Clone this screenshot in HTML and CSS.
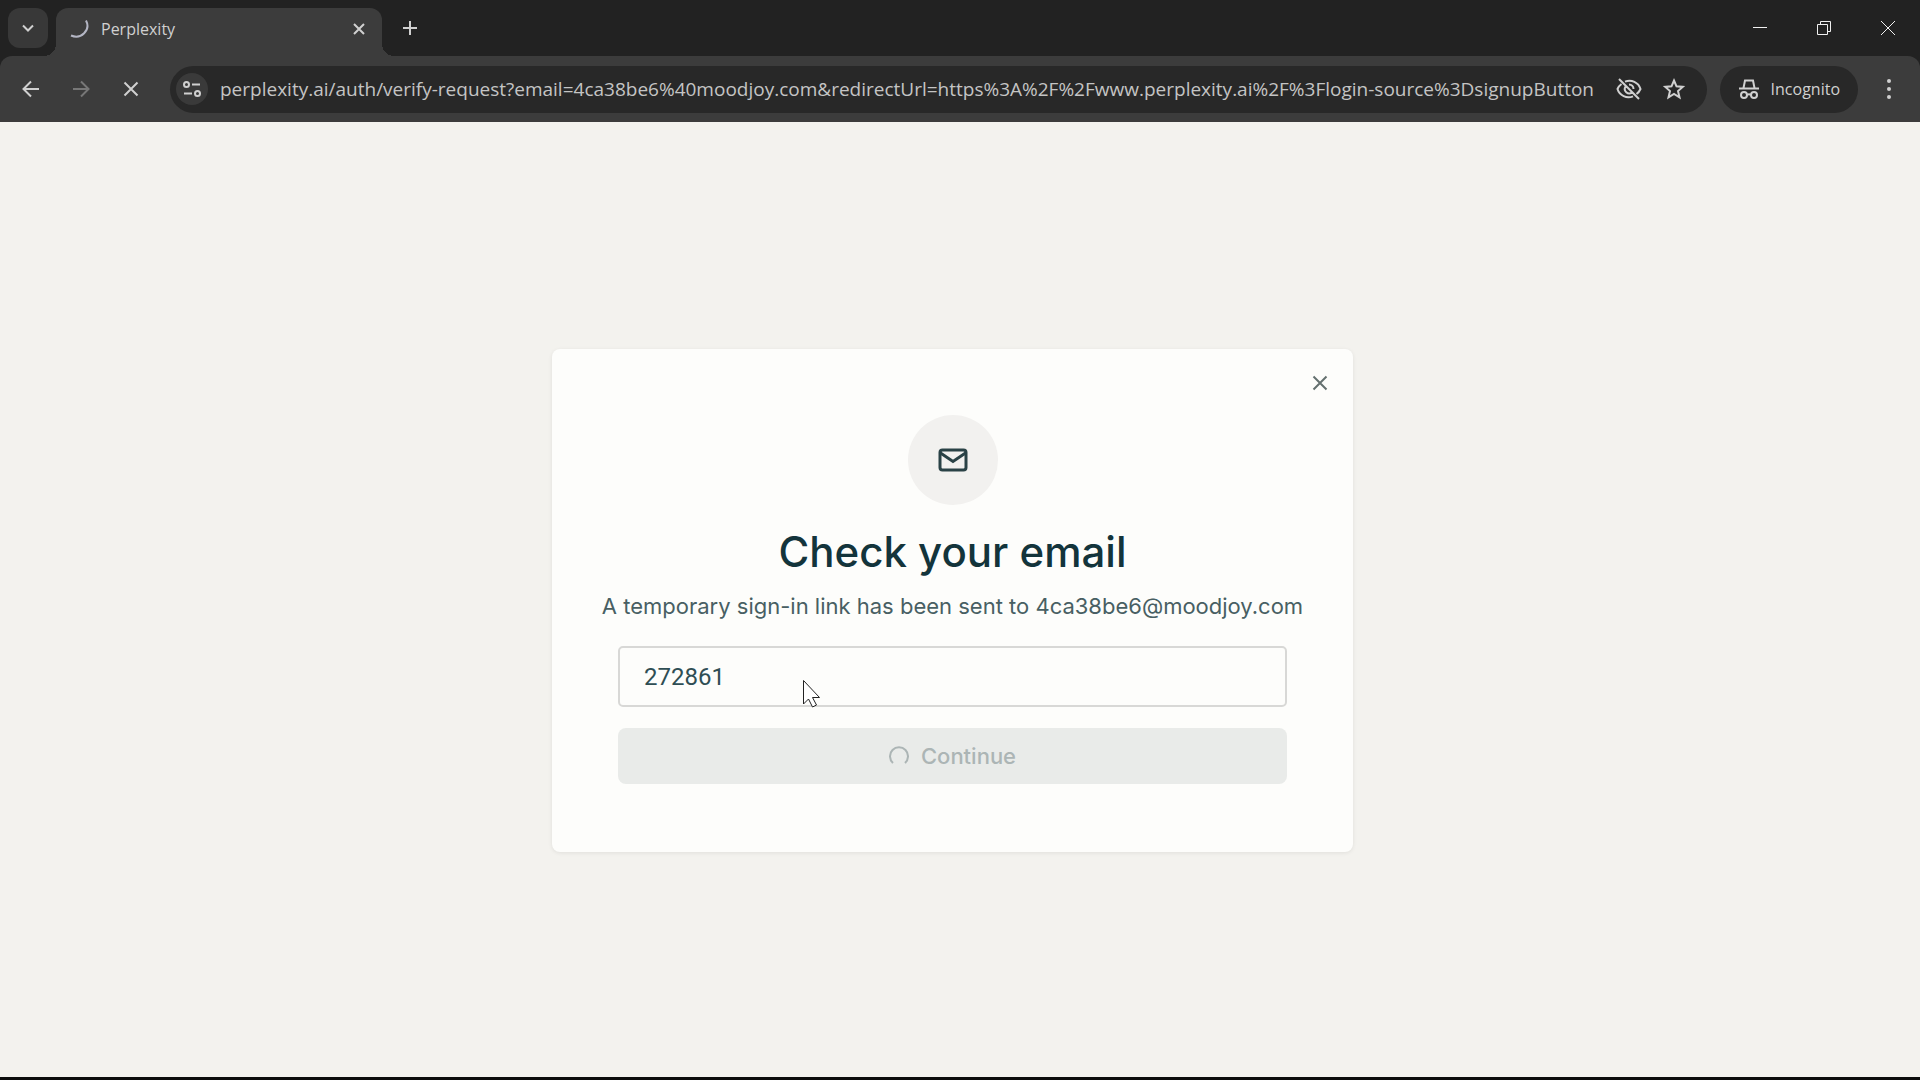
FILE: index.html
```html
<!DOCTYPE html>
<html lang="en">
<head>
    <meta charset="UTF-8">
    <meta name="viewport" content="width=device-width, initial-scale=1.0">
    <title>Perplexity</title>
    <link rel="stylesheet" href="styles.css">
</head>
<body>
    <header class="browser">
        <div class="tab-strip">
            <button class="tab-search" aria-label="Search tabs">
                <svg width="16" height="16" viewBox="0 0 16 16"><path d="M3 5.5l5 5 5-5"/></svg>
            </button>
            <div class="tab">
                <svg class="tab-spinner" width="20" height="20" viewBox="0 0 20 20"><path d="M16 1.5C21 11 11 21 1 16.500"/></svg>
                <span class="tab-title">Perplexity</span>
                <button class="icon-button tab-close" aria-label="Close tab">
                    <svg width="14" height="14" viewBox="0 0 14 14"><path d="M2 2l10 10M12 2L2 12"/></svg>
                </button>
            </div>
            <button class="icon-button new-tab" aria-label="New tab">
                <svg width="16" height="16" viewBox="0 0 16 16"><path d="M8 1v14M1 8h14"/></svg>
            </button>
            <div class="window-controls">
                <button class="icon-button" aria-label="Minimize">
                    <svg width="16" height="16" viewBox="0 0 16 16"><path d="M1 7.5h14"/></svg>
                </button>
                <button class="icon-button" aria-label="Restore">
                    <svg width="16" height="16" viewBox="0 0 16 16"><path d="M1.5 4.5h10v10h-10zM4.5 4.5v-3h10v10h-3"/></svg>
                </button>
                <button class="icon-button" aria-label="Close">
                    <svg width="16" height="16" viewBox="0 0 16 16"><path d="M1 1l14 14M15 1L1 15"/></svg>
                </button>
            </div>
        </div>
        <div class="toolbar">
            <nav class="nav-buttons">
                <button class="icon-button" aria-label="Back">
                    <svg width="24" height="24" viewBox="0 0 24 24"><path d="M20 12H5M12 4.5L4.5 12l7.5 7.5"/></svg>
                </button>
                <button class="icon-button" aria-label="Forward" disabled>
                    <svg width="24" height="24" viewBox="0 0 24 24"><path d="M4 12h15M12 4.5l7.5 7.5-7.5 7.5"/></svg>
                </button>
                <button class="icon-button" aria-label="Stop">
                    <svg width="24" height="24" viewBox="0 0 24 24"><path d="M5.5 5.5l13 13M18.5 5.5l-13 13"/></svg>
                </button>
            </nav>
            <div class="omnibox">
                <button class="site-info" aria-label="Site information">
                    <svg width="20" height="20" viewBox="0 0 20 20"><circle cx="4.5" cy="5.5" r="2.5"/><path d="M10 5.5h8M2 14.5h8"/><circle cx="15.5" cy="14.5" r="2.5"/></svg>
                </button>
                <input class="url" type="text" aria-label="Address" value="perplexity.ai/auth/verify-request?email=4ca38be6%40moodjoy.com&amp;redirectUrl=https%3A%2F%2Fwww.perplexity.ai%2F%3Flogin-source%3DsignupButton">
                <button class="icon-button" aria-label="Third-party cookies blocked">
                    <svg width="28" height="28" viewBox="0 0 28 28"><path d="M10 6.7A11.500 11.500 0 0 1 25.500 14a12 12 0 0 1-4 5M18 21.300A11.500 11.500 0 0 1 2.500 14a12 12 0 0 1 4-5M10.500 11.500a4.500 4.500 0 0 0 6.500 6M14 9.500a4.500 4.500 0 0 1 4.500 4.500M4 4l20 20"/></svg>
                </button>
                <button class="icon-button" aria-label="Bookmark this tab">
                    <svg width="24" height="24" viewBox="0 0 24 24"><path d="M12 3.5l2.500 5.800 6.300.6-4.800 4.200 1.500 6.200L12 17l-5.500 3.300L8 14.100 3.200 9.900l6.300-.6z"/></svg>
                </button>
            </div>
            <button class="incognito">
                <svg width="22" height="22" viewBox="0 0 22 22"><path d="M5.500 10L7 2.500h8L16.500 10M1 10.500h20"/><circle cx="6" cy="17" r="3"/><circle cx="16" cy="17" r="3"/><path d="M9 17q2-1.500 4 0"/></svg>
                Incognito
            </button>
            <button class="icon-button menu-button" aria-label="Menu">
                <svg width="24" height="24" viewBox="0 0 24 24"><circle cx="12" cy="4" r="2"/><circle cx="12" cy="12" r="2"/><circle cx="12" cy="20" r="2"/></svg>
            </button>
        </div>
    </header>

    <main class="page">
        <form class="card">
            <button class="card-close" type="button" aria-label="Close">
                <svg width="16" height="16" viewBox="0 0 16 16"><path d="M1.5 1.5l13 13M14.5 1.5l-13 13"/></svg>
            </button>
            <div class="mail-badge">
                <svg width="30" height="24" viewBox="0 0 30 24"><rect x="2" y="2" width="26" height="20" rx="2.5"/><path d="M2.5 5L15 13.500 27.500 5"/></svg>
            </div>
            <h1 class="title">Check your email</h1>
            <p class="subtitle">A temporary sign-in link has been sent to 4ca38be6@moodjoy.com</p>
            <div class="field">
                <input class="code-input" type="text" aria-label="Code" value="272861">
                <svg class="cursor" width="20" height="30" viewBox="0 0 20 30"><path d="M1.5 1.5v23.500l5-5 4 8 4-2-4-7.500h7z"/></svg>
            </div>
            <button class="continue" type="submit" disabled>
                <svg width="20" height="20" viewBox="0 0 20 20"><path d="M4 17A9 9 0 1 1 16 17"/></svg>
                Continue
            </button>
        </form>
    </main>
</body>
</html>
```
FILE: styles.css
```css
* {
    box-sizing: border-box;
}
body {
    margin: 0;
    min-height: 100vh;
    display: flex;
    flex-direction: column;
    background-color: #f3f2ee;
    border-bottom: 3px solid #0c0c0c;
    font-family: Inter, sans-serif;
}
button {
    border: none;
    padding: 0;
    background: none;
    color: inherit;
    font-family: inherit;
}
svg {
    display: block;
    flex: none;
    fill: none;
    stroke: currentColor;
    stroke-width: 2;
}

/* browser */
.browser {
    background-color: #222222;
    color: #d0d0d0;
    font-family: "Open Sans", "Noto Sans", sans-serif;
}
.tab-strip {
    display: flex;
    align-items: center;
    height: 56px;
    padding-left: 8px;
}
.tab-search {
    display: grid;
    place-items: center;
    width: 40px;
    height: 40px;
    border-radius: 12px;
    background-color: #383838;
}
.icon-button {
    display: grid;
    place-items: center;
    width: 40px;
    height: 40px;
    flex: none;
}
.tab {
    position: relative;
    display: flex;
    align-items: center;
    align-self: flex-end;
    gap: 11px;
    width: 326px;
    height: 48px;
    margin-left: 8px;
    padding: 0 3px 7px 14px;
    border-radius: 12px 12px 0 0;
    background-color: #3c3c3c;
}
/* curved feet where the tab meets the toolbar */
.tab::before,
.tab::after {
    content: "";
    position: absolute;
    bottom: 0;
    width: 12px;
    height: 12px;
}
.tab::before {
    right: 100%;
    background: radial-gradient(circle at 0 0, transparent 12px, #3c3c3c 12px);
}
.tab::after {
    left: 100%;
    background: radial-gradient(circle at 100% 0, transparent 12px, #3c3c3c 12px);
}
.tab-spinner {
    color: #b4b6c4;
}
.tab-title {
    flex: 1;
    font-size: 16px;
}
.new-tab {
    margin-left: 8px;
}
.window-controls {
    display: flex;
    margin-left: auto;
    color: #f0f0f0;
}
.window-controls .icon-button {
    width: 64px;
}
.window-controls svg {
    stroke-width: 1;
}
.toolbar {
    display: flex;
    align-items: center;
    height: 66px;
    padding: 0 11px;
    border-radius: 12px 12px 0 0;
    background-color: #3c3c3c;
}
.nav-buttons {
    display: flex;
    gap: 10px;
    margin-right: 19px;
}
.nav-buttons button:disabled {
    color: #777777;
}
.omnibox {
    display: flex;
    align-items: center;
    flex: 1;
    min-width: 0;
    height: 47px;
    padding: 0 13px 0 6px;
    gap: 5px;
    border-radius: 24px;
    background-color: #282828;
}
.site-info {
    display: grid;
    place-items: center;
    width: 32px;
    height: 32px;
    flex: none;
    border-radius: 50%;
    background-color: #3a3a3a;
}
.url {
    flex: 1;
    min-width: 0;
    margin-left: 7px;
    padding: 0;
    border: none;
    background: none;
    color: #c4c4c4;
    font: 19px "Open Sans", "Noto Sans", sans-serif;
}
.incognito {
    display: flex;
    align-items: center;
    gap: 11px;
    height: 47px;
    margin-left: 13px;
    padding: 0 18px;
    border-radius: 24px;
    background-color: #282828;
    font-size: 16px;
}
.menu-button {
    margin-left: 11px;
}
.menu-button svg {
    fill: currentColor;
    stroke: none;
}

.page {
    display: flex;
    align-items: center;
    justify-content: center;
    flex: 1;
    padding: 2px 15px 0 0;
}
.card {
    position: relative;
    display: flex;
    flex-direction: column;
    align-items: center;
    width: 100%;
    max-width: 801px;
    padding: 66px 66px 68px;
    border-radius: 8px;
    background-color: #fdfdfb;
    box-shadow: 0 1px 4px rgba(0, 0, 0, 0.08);
    color: #13343b;
}
.card-close {
    position: absolute;
    top: 18px;
    right: 17px;
    display: grid;
    place-items: center;
    width: 32px;
    height: 32px;
    color: #64706f;
}
.mail-badge {
    display: grid;
    place-items: center;
    width: 90px;
    height: 90px;
    border-radius: 50%;
    background-color: #f2f1ef;
    color: #2a4246;
}
.mail-badge svg {
    stroke-width: 3;
}
.title {
    margin: 23px 0 14px;
    font-size: 42px;
    font-weight: 500;
    line-height: 48px;
}
.subtitle {
    margin: 0 0 24px;
    color: #485f63;
    font-size: 22px;
    line-height: 32px;
    white-space: nowrap;
}
.field {
    position: relative;
    width: 100%;
    margin-bottom: 21px;
}
.code-input {
    display: block;
    width: 100%;
    height: 61px;
    padding: 0 24px;
    border: 2px solid #d8d8d6;
    border-radius: 5px;
    outline: none;
    background-color: #fdfdfb;
    color: #2f4e54;
    font: 24px Roboto, sans-serif;
}
.cursor {
    position: absolute;
    left: 184px;
    top: 33px;
    fill: #ffffff;
    stroke: #222222;
    stroke-width: 1;
}
.continue {
    display: flex;
    align-items: center;
    justify-content: center;
    gap: 12px;
    width: 100%;
    height: 56px;
    border-radius: 8px;
    background-color: #e9ebe9;
    color: #acb5b5;
    font-size: 22px;
    font-weight: 500;
}
```
